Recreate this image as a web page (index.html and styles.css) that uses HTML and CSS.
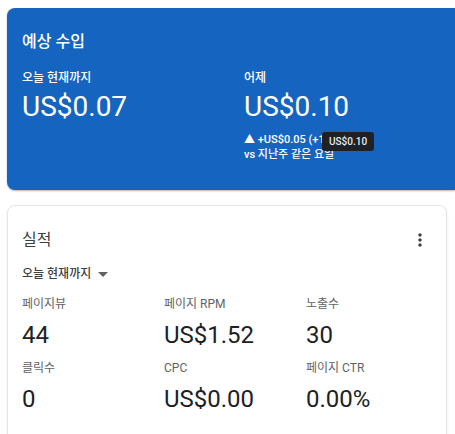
FILE: index.html
```html
<!DOCTYPE html>
<html lang="ko">
<head>
    <meta charset="UTF-8">
    <meta name="viewport" content="width=device-width, initial-scale=1.0">
    <title>예상 수입</title>
    <link rel="stylesheet" href="styles.css">
</head>
<body>

<div class="page">
    <!-- Thẻ thu nhập dự kiến -->
    <section class="card earnings">
        <h2 class="earnings-title">예상 수입</h2>
        <div class="earn-cols">
            <div class="earn-col">
                <div class="earn-label">오늘 현재까지</div>
                <div class="earn-value">US$0.07</div>
            </div>
            <div class="earn-col">
                <div class="earn-label">어제</div>
                <div class="earn-value">US$0.10</div>
                <div class="earn-delta">
                    <div>▲ +US$0.05 (+100%)</div>
                    <div>vs 지난주 같은 요일</div>
                    <span class="tooltip">US$0.10</span>
                </div>
            </div>
        </div>
    </section>

    <!-- Thẻ hiệu suất -->
    <section class="card perf">
        <div class="perf-head">
            <h2 class="perf-title">실적</h2>
            <button class="more-btn" aria-label="더보기">
                <svg width="20" height="20" viewBox="0 0 24 24"><path fill="#3c4043" d="M12 8c1.1 0 2-.9 2-2s-.9-2-2-2-2 .9-2 2 .9 2 2 2zm0 2c-1.1 0-2 .9-2 2s.9 2 2 2 2-.9 2-2-.9-2-2-2zm0 6c-1.1 0-2 .9-2 2s.9 2 2 2 2-.9 2-2-.9-2-2-2z"/></svg>
            </button>
        </div>
        <div class="range">
            오늘 현재까지
            <svg width="10" height="5" viewBox="0 0 10 5"><path fill="#5f6368" d="M0 0h10L5 5z"/></svg>
        </div>
        <div class="metrics">
            <div class="metric"><div class="metric-label">페이지뷰</div><div class="metric-value">44</div></div>
            <div class="metric"><div class="metric-label">페이지 RPM</div><div class="metric-value">US$1.52</div></div>
            <div class="metric"><div class="metric-label">노출수</div><div class="metric-value">30</div></div>
            <div class="metric"><div class="metric-label">클릭수</div><div class="metric-value">0</div></div>
            <div class="metric"><div class="metric-label">CPC</div><div class="metric-value">US$0.00</div></div>
            <div class="metric"><div class="metric-label">페이지 CTR</div><div class="metric-value">0.00%</div></div>
        </div>
    </section>
</div>

</body>
</html>
```

FILE: styles.css
```css
html, body {
    margin: 0;
    padding: 0;
    overflow: hidden;
    background: #fff;
}
body {
    font-family: Roboto, "Noto Sans CJK KR", sans-serif;
    color: #202124;
}
.page {
    padding: 8px 0 0 7px;
}
.card {
    border-radius: 8px;
    box-sizing: border-box;
}
.earnings {
    background-color: #1565c0;
    color: #fff;
    width: 448px;
    height: 182px;
    padding: 22px 15px 0 15px;
    border-radius: 8px 0 0 8px;
    box-shadow: 0 1px 2px rgba(0, 0, 0, 0.3);
}
.earnings-title {
    margin: 0;
    font-size: 16px;
    line-height: 24px;
    font-weight: 500;
}
.earn-cols {
    display: flex;
    margin-top: 16px;
}
.earn-col {
    flex: 1;
}
.earn-col:first-child {
    flex: 0 0 222px;
}
.earn-label {
    font-size: 12px;
    line-height: 16px;
    font-weight: 500;
}
.earn-value {
    font-size: 28px;
    line-height: 36px;
    margin-top: 3px;
}
.earn-delta {
    position: relative;
    margin-top: 7px;
    font-size: 11px;
    line-height: 15px;
    font-weight: 500;
}
.tooltip {
    position: absolute;
    left: 78px;
    top: 0;
    background: #202124;
    color: #e8eaed;
    font-size: 10px;
    line-height: 19px;
    padding: 0 7px;
    border-radius: 3px;
    font-weight: 500;
}
.perf {
    margin-top: 15px;
    width: 440px;
    min-height: 240px;
    background: #fff;
    border: 1px solid #e6e6e6;
    padding: 22px 14px 0 14px;
    box-shadow: 0 1px 3px rgba(0, 0, 0, 0.08);
}
.perf-head {
    display: flex;
    justify-content: space-between;
    align-items: center;
}
.perf-title {
    margin: 0;
    font-size: 16px;
    line-height: 24px;
    font-weight: 400;
    color: #3c4043;
}
.more-btn {
    border: none;
    background: none;
    padding: 0;
    margin-right: 2px;
    width: 20px;
    height: 20px;
}
.range {
    margin-top: 14px;
    font-size: 12px;
    line-height: 16px;
    font-weight: 500;
    color: #3c4043;
    display: flex;
    align-items: center;
    gap: 7px;
}
.metrics {
    display: grid;
    grid-template-columns: 142px 142px 142px;
    margin-top: 14px;
    row-gap: 9px;
}
.metric-label {
    font-size: 12px;
    line-height: 16px;
    color: #5f6368;
}
.metric-value {
    font-size: 24px;
    line-height: 32px;
    margin-top: 7px;
    color: #202124;
}
```
